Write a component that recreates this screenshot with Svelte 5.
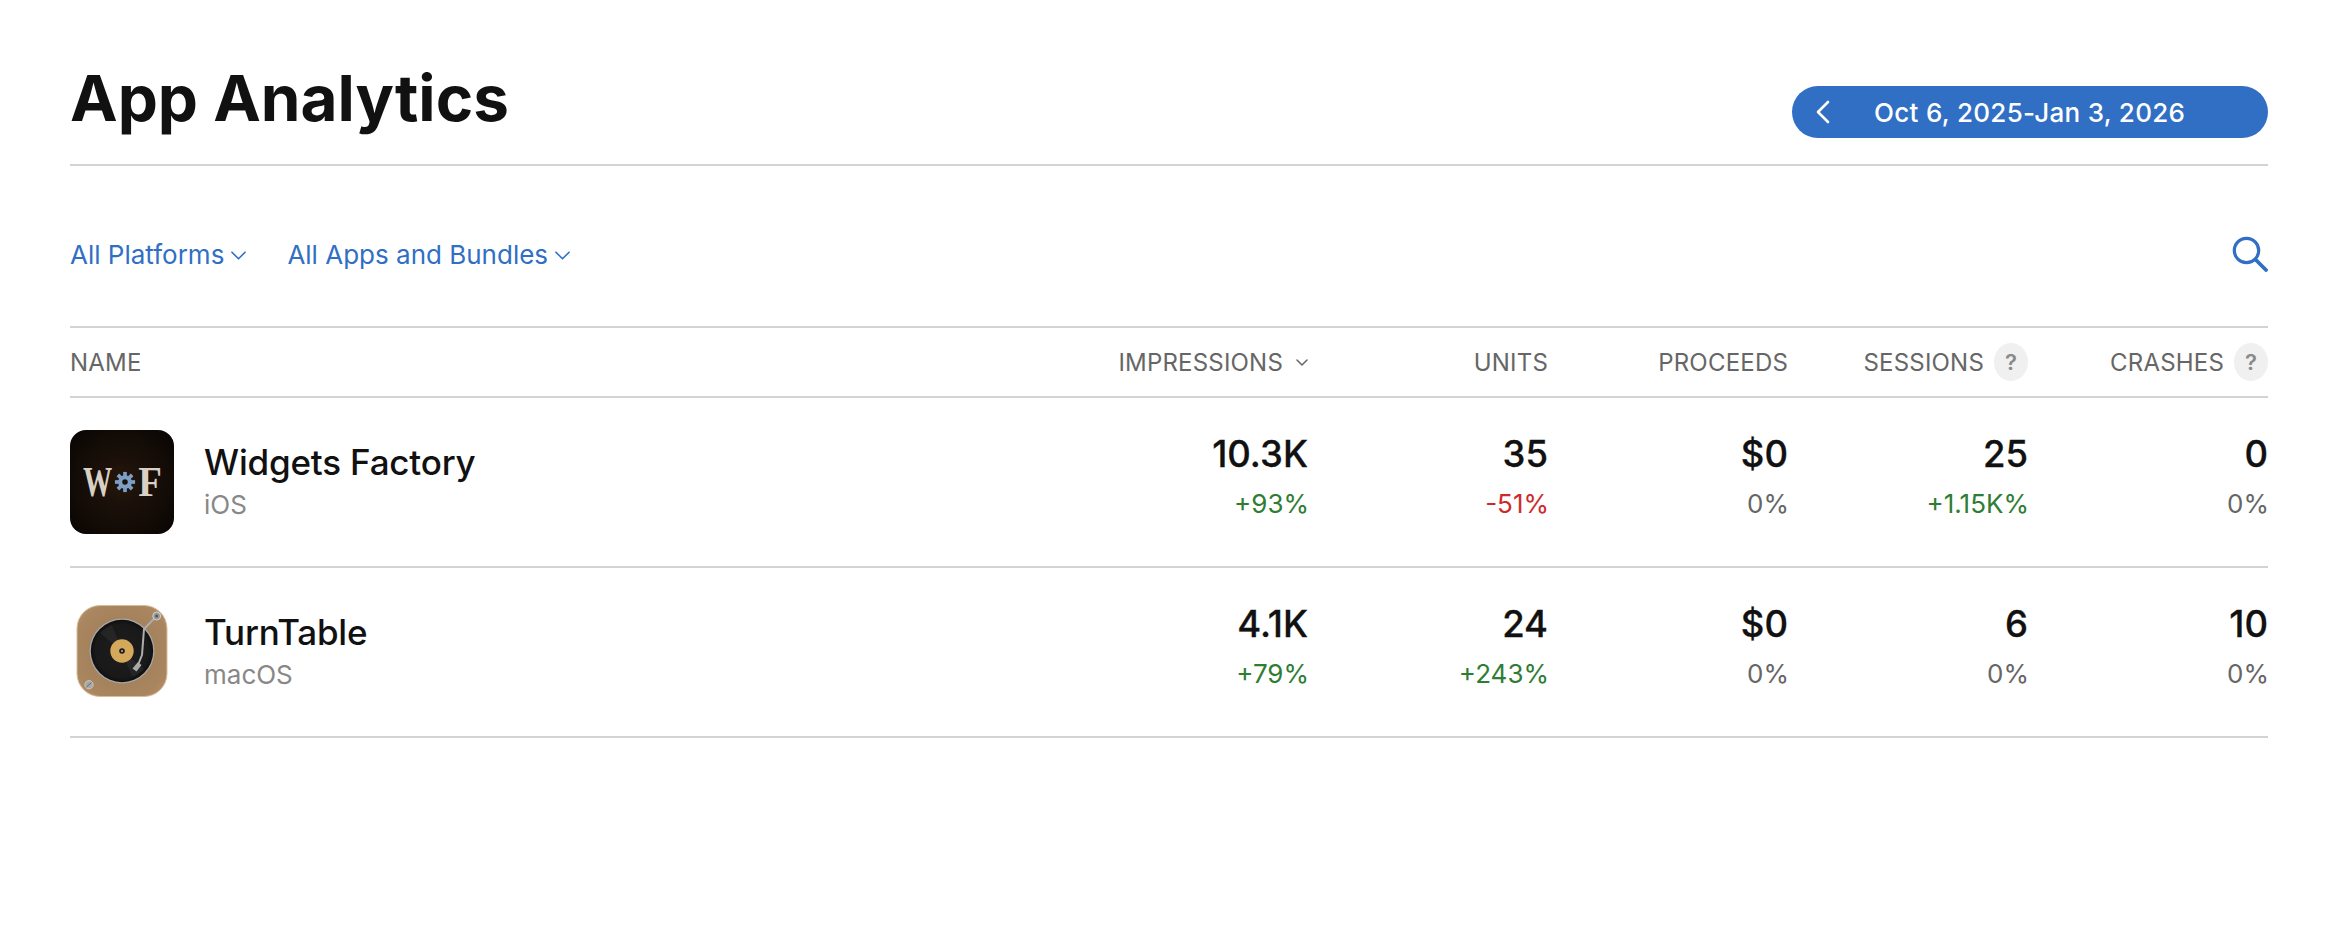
<script>
  const rows = [
    { name: 'Widgets Factory', os: 'iOS', icon: 'wf', cells: [['10.3K', '+93%', 'up'], ['35', '-51%', 'down'], ['$0', '0%', ''], ['25', '+1.15K%', 'up'], ['0', '0%', '']] },
    { name: 'TurnTable', os: 'macOS', icon: 'tt', cells: [['4.1K', '+79%', 'up'], ['24', '+243%', 'up'], ['$0', '0%', ''], ['6', '0%', ''], ['10', '0%', '']] }
  ];
  const teeth = [0, 45, 90, 135, 180, 225, 270, 315];
</script>

<main class="page">
  <header class="top">
    <h1>App Analytics</h1>
    <button class="range">
      <svg class="back" viewBox="0 0 14 24" width="14" height="24"><path d="M12 2 2 12l10 10" fill="none" stroke="#fff" stroke-width="2.6" stroke-linecap="round" stroke-linejoin="round"/></svg>
      <span>Oct 6, 2025-Jan 3, 2026</span>
    </button>
  </header>

  <div class="filters">
    <div class="links">
      <a href="#p">All Platforms <svg viewBox="0 0 16 9" width="15" height="9"><path d="m1 1 7 7 7-7" fill="none" stroke="currentColor" stroke-width="1.7" stroke-linecap="round" stroke-linejoin="round"/></svg></a>
      <a href="#a">All Apps and Bundles <svg viewBox="0 0 16 9" width="15" height="9"><path d="m1 1 7 7 7-7" fill="none" stroke="currentColor" stroke-width="1.7" stroke-linecap="round" stroke-linejoin="round"/></svg></a>
    </div>
    <svg class="search" viewBox="0 0 36 36" width="36" height="36"><circle cx="14.5" cy="14.5" r="12.2" fill="none" stroke="currentColor" stroke-width="3.2"/><path d="m23.5 23.5 10.5 10.5" fill="none" stroke="currentColor" stroke-width="3.8" stroke-linecap="round"/></svg>
  </div>

  <div class="grid head">
    <div class="namecol">NAME</div>
    <div>IMPRESSIONS <svg class="sort" viewBox="0 0 12 7" width="12" height="7"><path d="m1 1 5 5 5-5" fill="none" stroke="#666" stroke-width="1.5" stroke-linecap="round" stroke-linejoin="round"/></svg></div>
    <div>UNITS</div>
    <div>PROCEEDS</div>
    <div>SESSIONS <span class="q">?</span></div>
    <div>CRASHES <span class="q">?</span></div>
  </div>

  {#each rows as r}
    <div class="grid row">
      <div class="namecol app">
        {#if r.icon === 'wf'}
          <div class="icon wf">
            <span class="w">W</span>
            <svg viewBox="0 0 24 24" width="22" height="22">
              {#each teeth as t}<rect x="10" y="1" width="4" height="5" fill="#7c9fc6" transform="rotate({t} 12 12)"/>{/each}
              <circle cx="12" cy="12" r="7.5" fill="#7c9fc6"/><circle cx="12" cy="12" r="3" fill="#1a100a"/>
            </svg>
            <span class="f">F</span>
          </div>
        {:else}
          <svg class="icon" viewBox="0 0 104 104" width="104" height="104">
            <defs>
              <radialGradient id="wood" cx="0.5" cy="0.5" r="0.72"><stop offset="0" stop-color="#9c7a55"/><stop offset="0.75" stop-color="#a98660"/><stop offset="1" stop-color="#c09a6c"/></radialGradient>
              <radialGradient id="vinyl" cx="0.5" cy="0.5" r="0.5"><stop offset="0" stop-color="#1e1d1d"/><stop offset="0.85" stop-color="#1a1919"/><stop offset="1" stop-color="#0f0f0f"/></radialGradient>
            </defs>
            <rect x="7" y="5.5" width="90" height="91" rx="23" fill="url(#wood)" stroke="#d8bd99" stroke-width="1"/>
            <circle cx="52" cy="51" r="32.5" fill="#a6a6a6"/>
            <circle cx="52" cy="51" r="31.2" fill="url(#vinyl)"/>
            <path d="M52 51 30 33a28 28 0 0 1 12-8z" fill="#fff" opacity="0.05"/>
            <path d="M52 51 74 69a28 28 0 0 1-12 8z" fill="#fff" opacity="0.05"/>
            <circle cx="52" cy="51" r="11.7" fill="#d5a95c"/>
            <circle cx="52" cy="51" r="2.8" fill="#1b1a1a"/>
            <circle cx="52" cy="51" r="1" fill="#bbb"/>
            <path d="M86.7 16 74 29 72 55 68 65" fill="none" stroke="#adadad" stroke-width="2" stroke-linejoin="round"/>
            <path d="m68 62 3.5 3-5 6.5-4-3z" fill="#a8a8a8"/>
            <circle cx="86.7" cy="16" r="4" fill="#9a9a9a" stroke="#ddd" stroke-width="0.8"/>
            <circle cx="86.7" cy="16" r="1.5" fill="#555"/>
            <circle cx="19" cy="84.7" r="4.2" fill="#a8a8a8" stroke="#ddd" stroke-width="0.6"/>
            <path d="m16.5 87 5-4.5" stroke="#666" stroke-width="1"/>
          </svg>
        {/if}
        <div class="meta">
          <div class="appname">{r.name}</div>
          <div class="os">{r.os}</div>
        </div>
      </div>
      {#each r.cells as c}
        <div class="cell">
          <div class="num">{c[0]}</div>
          <div class="delta {c[2]}">{c[1]}</div>
        </div>
      {/each}
    </div>
  {/each}
</main>

<style>
  :global(body) { margin: 0; background: #fff; }
  .page { box-sizing: border-box; width: 2340px; height: 940px; padding: 0 72px 0 70px; font-family: Inter, "Liberation Sans", sans-serif; color: #111; }
  .top { display: flex; justify-content: space-between; align-items: flex-end; height: 166px; box-sizing: border-box; border-bottom: 2px solid #d3d3d3; padding-bottom: 26px; }
  h1 { margin: 0 0 8px; font-size: 63.8px; line-height: 64px; font-weight: 700; }
  .range { width: 476px; height: 52px; border: 0; border-radius: 26px; background: #306fc4; color: #fff; display: flex; align-items: center; padding: 0 0 0 24px; font: 500 26px Inter, sans-serif; letter-spacing: 0.3px; }
  .range span { margin-left: 44px; }
  .filters { height: 160px; box-sizing: border-box; padding-top: 16px; display: flex; align-items: center; justify-content: space-between; color: #306fc4; }
  .links { display: flex; gap: 41px; }
  a { color: #306fc4; text-decoration: none; font-size: 26px; display: flex; align-items: center; gap: 7px; }
  a svg { margin-top: 3px; }
  .grid { display: grid; grid-template-columns: 1fr repeat(5, 240px); border-top: 2px solid #d3d3d3; text-align: right; }
  .head { height: 68px; align-items: center; color: #666; font-size: 24px; letter-spacing: 0.2px; }
  .head > div { display: flex; justify-content: flex-end; align-items: center; gap: 10px; }
  .head > .namecol { justify-content: flex-start; }
  .sort { margin-left: 3px; }
  .q { width: 34px; height: 38px; border-radius: 50%; background: #f0f0f0; color: #8a8a8a; font-size: 22px; font-weight: 600; display: flex; align-items: center; justify-content: center; }
  .row { height: 168px; }
  .row:last-child { border-bottom: 2px solid #d3d3d3; }
  .app { display: flex; align-items: center; gap: 30px; }
  .icon { flex: none; width: 104px; height: 104px; }
  .wf { border-radius: 16px; background: radial-gradient(circle, #24160c, #080503); display: flex; align-items: center; justify-content: center; gap: 3px; color: #d8d0c4; font: 700 43px "Liberation Serif", serif; }
  .wf span { display: flex; justify-content: center; height: 48px; line-height: 48px; }
  .w { width: 27px; transform: scaleX(0.68); }
  .f { width: 22px; transform: scaleX(0.9); }
  .meta { text-align: left; }
  .appname { font-size: 35px; font-weight: 500; line-height: 44px; letter-spacing: -0.2px; }
  .os { font-size: 26px; color: #888; line-height: 38px; margin-top: 2px; }
  .cell { padding-top: 34px; }
  .num { font-size: 36.5px; font-weight: 500; line-height: 44px; -webkit-text-stroke: 0.3px #111; }
  .delta { font-size: 26px; line-height: 36px; margin-top: 10px; margin-right: -1px; color: #666; }
  .up { color: #2e7d32; }
  .down { color: #cf2a2a; }
</style>
